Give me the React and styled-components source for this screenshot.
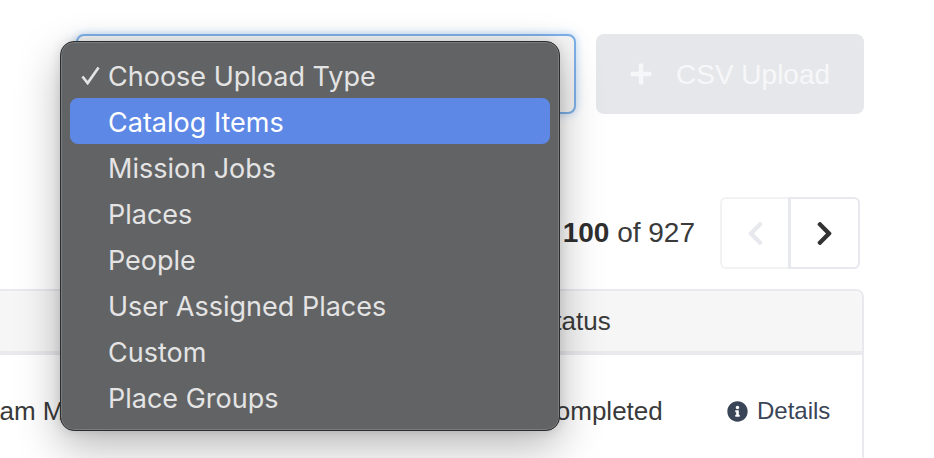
import React from 'react'
import styled, { createGlobalStyle } from 'styled-components'
import { FaPlus, FaChevronLeft, FaChevronRight, FaInfoCircle } from 'react-icons/fa'

const GlobalStyle = createGlobalStyle`
  html, body {
    margin: 0;
    padding: 0;
    background: #fff;
  }
  * {
    box-sizing: border-box;
  }
`

const options = ['Catalog Items', 'Mission Jobs', 'Places', 'People', 'User Assigned Places', 'Custom', 'Place Groups']

export default function App() {
  return (
    <Page>
      <GlobalStyle />
      <Toolbar>
        <SelectBox />
        <UploadButton disabled>
          <FaPlus size={24} />
          <UploadLabel>CSV Upload</UploadLabel>
        </UploadButton>
      </Toolbar>
      <PagerRow>
        <Count><b>1 - 100</b> of 927</Count>
        <Pager>
          <PageButton $off><FaChevronLeft size={27} /></PageButton>
          <PageButton><FaChevronRight size={27} /></PageButton>
        </Pager>
      </PagerRow>
      <Table>
        <HeadRow>
          <div />
          <div>Status</div>
          <div />
        </HeadRow>
        <BodyRow>
          <div>Team Members</div>
          <div>Completed</div>
          <DetailsLink><FaInfoCircle size={21} /> Details</DetailsLink>
        </BodyRow>
      </Table>
      <Menu>
        <MenuItem>
          <Tick viewBox="0 0 20 20">
            <path d="M1.5 11 L7 18 L18.5 1.5" />
          </Tick>
          Choose Upload Type
        </MenuItem>
        {options.map((o, i) => (
          <MenuItem key={o} $active={i === 0}>{o}</MenuItem>
        ))}
      </Menu>
    </Page>
  )
}

const Page = styled.div`
  position: relative;
  width: 934px;
  height: 458px;
  overflow: hidden;
  padding: 34px 70px 0 0;
  font-family: "Liberation Sans", Arial, sans-serif;
  color: #333;
  background: #fff;
`

const Toolbar = styled.div`
  display: flex;
  justify-content: flex-end;
  gap: 20px;
`

const SelectBox = styled.div`
  width: 500px;
  height: 80px;
  border: 2px solid #7db0e8;
  border-radius: 8px;
  background: #f5f5f5;
  box-shadow: 0 0 10px rgba(125, 176, 232, 0.55);
`

const UploadButton = styled.button`
  display: flex;
  align-items: center;
  gap: 23px;
  width: 268px;
  height: 80px;
  padding: 0 0 0 33px;
  border: 0;
  border-radius: 8px;
  background: #e6e7eb;
  color: #f6f7f9;
  font: 28px "Liberation Sans", Arial, sans-serif;
`

const UploadLabel = styled.span`
  padding-top: 2px;
`

const PagerRow = styled.div`
  display: flex;
  justify-content: flex-end;
  align-items: center;
  gap: 25px;
  margin-top: 83px;
  padding-right: 4px;
`

const Count = styled.div`
  font-size: 28px;
  color: #3a3a3a;
  b {
    color: #2f2f2f;
  }
`

const Pager = styled.div`
  display: flex;
  width: 140px;
  height: 72px;
`

const PageButton = styled.div`
  display: flex;
  align-items: center;
  justify-content: center;
  flex: ${p => (p.$off ? '0 0 68px' : '1')};
  border: 2px solid ${p => (p.$off ? '#f1f2f4' : '#e8e9ee')};
  border-radius: ${p => (p.$off ? '6px 0 0 6px' : '0 6px 6px 0')};
  border-right-width: ${p => (p.$off ? 0 : '2px')};
  border-left-width: ${p => (p.$off ? '2px' : '3px')};
  color: ${p => (p.$off ? '#e8e9ee' : '#333')};
`

const Table = styled.div`
  width: 924px;
  margin: 20px 0 0 -60px;
  border: 2px solid #e9e9ee;
  border-radius: 8px 8px 0 0;
  font-size: 26px;
  color: #3a3a3a;
`

const HeadRow = styled.div`
  display: grid;
  grid-template-columns: 565px 190px 1fr;
  align-items: center;
  height: 64px;
  padding-left: 30px;
  background: #f6f6f7;
  border-bottom: 4px solid #e9e9ee;
  border-radius: 8px 8px 0 0;
`

const BodyRow = styled.div`
  display: grid;
  grid-template-columns: 565px 190px 1fr;
  align-items: center;
  height: 112px;
  padding-left: 30px;
  background: #fff;
`

const DetailsLink = styled.div`
  display: flex;
  align-items: center;
  gap: 9px;
  font-size: 24px;
  color: #3b4558;
`

const Menu = styled.div`
  position: absolute;
  left: 60px;
  top: 41px;
  width: 500px;
  height: 390px;
  padding: 10px 9px;
  border: 1px solid #2b2c2e;
  border-radius: 14px;
  background: #626365;
  box-shadow: inset 0 0 0 1px #7a7b7d, 0 16px 44px rgba(0, 0, 0, 0.28), 0 0 12px rgba(0, 0, 0, 0.12);
`

const MenuItem = styled.div`
  position: relative;
  display: flex;
  align-items: center;
  height: 46px;
  padding: 2px 0 0 38px;
  border-radius: 8px;
  font-family: Inter, "Noto Sans", sans-serif;
  font-size: 27px;
  color: ${p => (p.$active ? '#fff' : '#e4e4e4')};
  background: ${p => (p.$active ? '#5d88e6' : 'transparent')};
`

const Tick = styled.svg`
  position: absolute;
  left: 11px;
  top: 14px;
  width: 19px;
  height: 19px;
  fill: none;
  stroke: #e4e4e4;
  stroke-width: 2.8;
`
